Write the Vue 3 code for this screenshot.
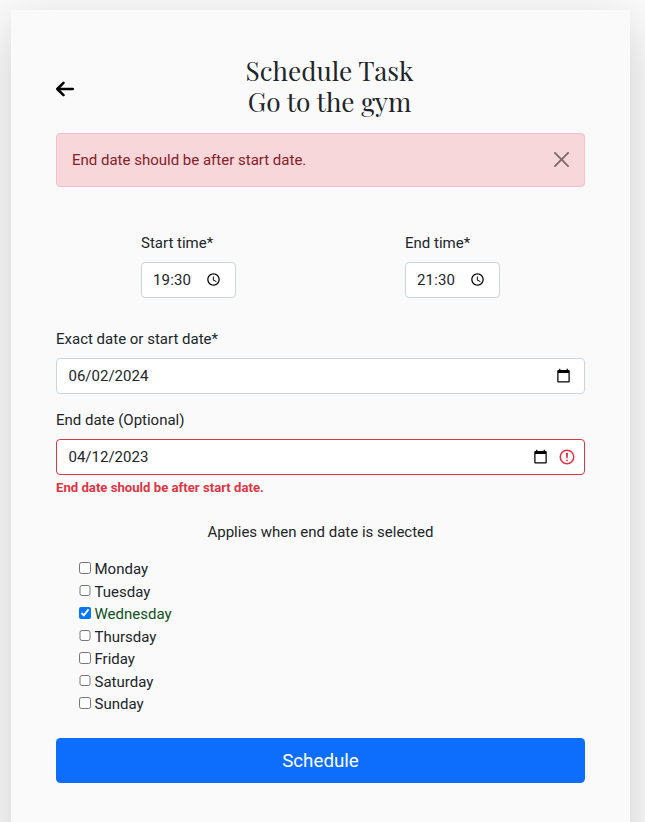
<script setup>
import { ref } from 'vue'

const startTime = ref('19:30')
const endTime = ref('21:30')
const startDate = ref('06/02/2024')
const endDate = ref('04/12/2023')
const showAlert = ref(true)
const days = ['Monday', 'Tuesday', 'Wednesday', 'Thursday', 'Friday', 'Saturday', 'Sunday']
const selected = ref(['Wednesday'])
</script>

<template>
  <main class="card">
    <header class="header">
      <svg class="back" viewBox="0 0 18 16" role="button" aria-label="Back">
        <path d="M7.500 1.800 1.300 8 7.500 14.200M1.600 8h15.200" />
      </svg>
      <h1 class="title">Schedule Task<br />Go to the gym</h1>
    </header>

    <div v-if="showAlert" class="alert">
      <span>End date should be after start date.</span>
      <svg class="close" viewBox="0 0 16 16" @click="showAlert = false">
        <path d="M.293.293a1 1 0 0 1 1.414 0L8 6.586 14.293.293a1 1 0 1 1 1.414 1.414L9.414 8l6.293 6.293a1 1 0 0 1-1.414 1.414L8 9.414l-6.293 6.293a1 1 0 0 1-1.414-1.414L6.586 8 .293 1.707a1 1 0 0 1 0-1.414z" />
      </svg>
    </div>

    <div class="times">
      <label class="time-field">
        <span class="label">Start time*</span>
        <span class="control">
          <input v-model="startTime" class="input" />
          <svg class="clock" viewBox="0 0 24 24"><path d="M11.99 2C6.47 2 2 6.48 2 12s4.47 10 9.99 10C17.52 22 22 17.52 22 12S17.52 2 11.99 2zM12 20c-4.42 0-8-3.58-8-8s3.58-8 8-8 8 3.58 8 8-3.58 8-8 8zm.5-13H11v6l5.25 3.15.75-1.23-4.5-2.67z" /></svg>
        </span>
      </label>
      <label class="time-field">
        <span class="label">End time*</span>
        <span class="control">
          <input v-model="endTime" class="input" />
          <svg class="clock" viewBox="0 0 24 24"><path d="M11.99 2C6.47 2 2 6.48 2 12s4.47 10 9.99 10C17.52 22 22 17.52 22 12S17.52 2 11.99 2zM12 20c-4.42 0-8-3.58-8-8s3.58-8 8-8 8 3.58 8 8-3.58 8-8 8zm.5-13H11v6l5.25 3.15.75-1.23-4.5-2.67z" /></svg>
        </span>
      </label>
    </div>

    <label class="date-field">
      <span class="label">Exact date or start date*</span>
      <span class="control">
        <input v-model="startDate" class="input date" />
        <svg class="calendar" viewBox="0 0 24 24"><path d="M20 3h-1V1h-2v2H7V1H5v2H4c-1.1 0-2 .9-2 2v16c0 1.100.9 2 2 2h16c1.100 0 2-.9 2-2V5c0-1.100-.9-2-2-2zm0 18H4V8h16v13z" /></svg>
      </span>
    </label>
    <label class="date-field">
      <span class="label">End date (Optional)</span>
      <span class="control invalid">
        <input v-model="endDate" class="input date" />
        <svg class="calendar" viewBox="0 0 24 24"><path d="M20 3h-1V1h-2v2H7V1H5v2H4c-1.1 0-2 .9-2 2v16c0 1.100.9 2 2 2h16c1.100 0 2-.9 2-2V5c0-1.100-.9-2-2-2zm0 18H4V8h16v13z" /></svg>
        <svg class="warning" viewBox="0 0 12 12">
          <circle cx="6" cy="6" r="4.500" />
          <path class="mark" d="M5.800 3.600h.4L6 6.500z" />
          <circle class="dot" cx="6" cy="8.200" r=".6" />
        </svg>
      </span>
    </label>
    <div class="feedback">End date should be after start date.</div>

    <p class="hint">Applies when end date is selected</p>

    <div class="days">
      <label v-for="day in days" :key="day" class="day" :class="{ checked: selected.includes(day) }">
        <input v-model="selected" type="checkbox" class="check" :value="day" />
        <span>{{ day }}</span>
      </label>
    </div>

    <button class="submit" type="button">Schedule</button>
  </main>
</template>

<style>
body {
  background: #fafafa;
}
#app {
  height: 822px;
  overflow: hidden;
}
</style>

<style scoped>
.card {
  box-sizing: border-box;
  width: 619px;
  height: 860px;
  margin: 10px 0 0 11px;
  padding: 46px 45px;
  background: #fafafa;
  box-shadow: 0 16px 48px rgba(0, 0, 0, 0.175);
  color: #212529;
  font: 15px/22.5px Roboto, sans-serif;
}
.header {
  display: flex;
  align-items: center;
  height: 62px;
  margin-bottom: 15px;
}
.back {
  width: 18px;
  height: 16px;
  margin-top: 4px;
  fill: none;
  stroke: #000;
  stroke-width: 2.5;
  stroke-linecap: round;
  stroke-linejoin: round;
}
.title {
  flex: 1;
  margin: 0 0 2px;
  font: 400 26.25px/31px "Playfair Display", "Liberation Serif", serif;
  text-align: center;
}
.alert {
  box-sizing: border-box;
  display: flex;
  align-items: center;
  justify-content: space-between;
  height: 54px;
  padding: 0 15px;
  border: 1px solid #f5c2c7;
  border-radius: 4px;
  background: #f8d7da;
  color: #842029;
}
.close {
  width: 15px;
  height: 15px;
  margin-bottom: 1px;
  opacity: 0.5;
}
.times {
  display: grid;
  grid-template-columns: 264px 1fr;
  margin: 45px 0 30px;
}
.time-field {
  width: 95px;
  margin-left: 85px;
}
.time-field,
.date-field {
  display: block;
}
.date-field + .date-field {
  margin-top: 15px;
}
.label {
  display: block;
  margin-bottom: 7px;
  line-height: 23px;
}
.control {
  box-sizing: border-box;
  display: flex;
  align-items: center;
  height: 36px;
  padding: 0 11px;
  border: 1px solid #ced4da;
  border-radius: 4px;
  background: #fff;
}
.input {
  flex: 1;
  min-width: 0;
  margin: 0;
  padding: 0;
  border: 0;
  outline: 0;
  background: transparent;
  color: #212529;
  font: inherit;
  letter-spacing: 0.15px;
}
.date {
  padding-left: 0.5px;
  letter-spacing: 0;
}
.clock,
.calendar {
  width: 15px;
  height: 15px;
  margin: 0 3px 1px 0;
}
.calendar {
  margin-right: 2px;
}
.invalid {
  padding-right: 8px;
  border-color: #dc3545;
}
.invalid .calendar {
  margin-right: 10px;
}
.warning {
  width: 18px;
  height: 18px;
  margin-bottom: 1px;
  fill: none;
  stroke: #dc3545;
}
.mark {
  stroke-linejoin: round;
}
.dot {
  fill: #dc3545;
  stroke: none;
}
.feedback {
  margin-top: 3px;
  color: #dc3545;
  font-size: 13.125px;
  font-weight: 700;
  line-height: 20px;
  letter-spacing: 0.02px;
}
.hint {
  margin: 23px 0 14px;
  text-align: center;
}
.days {
  padding: 0.6px 0 0 23px;
}
.day {
  display: flex;
  align-items: center;
  height: 22.5px;
}
.check {
  width: 11.5px;
  height: 11.5px;
  margin: -3px 4px 0 0;
}
.checked {
  color: #0f5119;
}
.submit {
  display: block;
  width: 100%;
  height: 45px;
  margin-top: 22.45px;
  padding: 0;
  border: 0;
  border-radius: 4.5px;
  background: #0d6efd;
  color: #fff;
  font: 18.75px/28px Roboto, sans-serif;
}
</style>
